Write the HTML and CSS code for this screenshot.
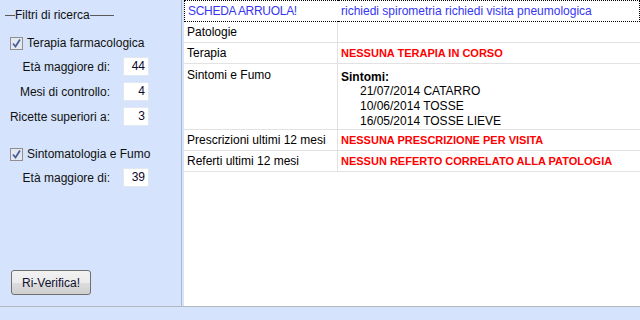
FILE: index.html
```html
<!DOCTYPE html>
<html lang="it">
<head>
<meta charset="UTF-8">
<title>Filtri di ricerca</title>
<link rel="stylesheet" href="styles.css">
</head>
<body>

<div class="window">
  <div class="main">
    <div class="sidebar">
      <div class="group-title"><span>Filtri di ricerca</span></div>

      <label class="check-row">
        <span class="checkbox"><svg width="11" height="11" viewBox="0 0 11 11"><path d="M2 5.5 L4.5 8.5 L9 1.5" fill="none" stroke="#4a5f9a" stroke-width="1.8"/></svg></span>
        Terapia farmacologica
      </label>
      <div class="field first">
        <span class="field-label">Età maggiore di:</span>
        <span class="field-input">44</span>
      </div>
      <div class="field">
        <span class="field-label">Mesi di controllo:</span>
        <span class="field-input">4</span>
      </div>
      <div class="field">
        <span class="field-label">Ricette superiori a:</span>
        <span class="field-input">3</span>
      </div>

      <label class="check-row second">
        <span class="checkbox"><svg width="11" height="11" viewBox="0 0 11 11"><path d="M2 5.5 L4.5 8.5 L9 1.5" fill="none" stroke="#4a5f9a" stroke-width="1.8"/></svg></span>
        Sintomatologia e Fumo
      </label>
      <div class="field first">
        <span class="field-label">Età maggiore di:</span>
        <span class="field-input">39</span>
      </div>

      <button class="verify">Ri-Verifica!</button>
    </div>

    <div class="content">
      <table class="scheda">
        <tr class="focus">
          <td class="name link">SCHEDA ARRUOLA!</td>
          <td class="link">richiedi spirometria richiedi visita pneumologica</td>
        </tr>
        <tr>
          <td class="name">Patologie</td>
          <td></td>
        </tr>
        <tr>
          <td class="name">Terapia</td>
          <td class="alert">NESSUNA TERAPIA IN CORSO</td>
        </tr>
        <tr class="tall">
          <td class="name">Sintomi e Fumo</td>
          <td>
            <div class="sym-title">Sintomi:</div>
            <div class="sym">21/07/2014 CATARRO</div>
            <div class="sym">10/06/2014 TOSSE</div>
            <div class="sym">16/05/2014 TOSSE LIEVE</div>
          </td>
        </tr>
        <tr>
          <td class="name">Prescrizioni ultimi 12 mesi</td>
          <td class="alert">NESSUNA PRESCRIZIONE PER VISITA</td>
        </tr>
        <tr>
          <td class="name">Referti ultimi 12 mesi</td>
          <td class="alert">NESSUN REFERTO CORRELATO ALLA PATOLOGIA</td>
        </tr>
      </table>
    </div>
  </div>
</div>

</body>
</html>
```

FILE: styles.css
```css
body {
  margin: 0;
  background: #d5e4fc;
  font-family: "Liberation Sans", Arial, sans-serif;
  font-size: 12px;
  color: #000;
}
.window {
  width: 640px;
  height: 320px;
  overflow: hidden;
}
.main {
  display: flex;
  height: 306px;
  border-bottom: 1px solid #b4b8bf;
}
.sidebar {
  width: 181px;
  border-right: 1px solid #aab9d0;
  margin-right: 2px;
  display: flex;
  flex-direction: column;
  color: #111;
}
.group-title {
  display: flex;
  align-items: center;
  height: 30px;
  margin-left: 5px;
  width: 109px;
}
.group-title::before {
  content: "";
  width: 10px;
  border-top: 1px solid #5a5a5a;
}
.group-title::after {
  content: "";
  flex: 1;
  border-top: 1px solid #5a5a5a;
}
.check-row {
  display: flex;
  align-items: center;
  height: 14px;
  margin-top: 6px;
  padding-left: 10px;
}
.check-row.second {
  margin-top: 21px;
}
.checkbox {
  width: 11px;
  height: 11px;
  border: 1px solid #8f8f8f;
  background: #e4e8f0;
  margin-right: 4px;
  display: flex;
}
.field {
  display: flex;
  align-items: center;
  height: 19px;
  margin-top: 6px;
}
.field.first {
  margin-top: 7px;
}
.field-label {
  width: 110px;
  text-align: right;
}
.field-input {
  margin-left: 13px;
  width: 26px;
  height: 19px;
  box-sizing: border-box;
  background: #fff;
  border: 1px solid #e2e8f0;
  text-align: right;
  padding-right: 3px;
  line-height: 17px;
  color: #0a0a2a;
}
.verify {
  margin: auto 0 11px 11px;
  width: 80px;
  height: 25px;
  font-family: inherit;
  font-size: 12px;
  color: #101030;
  border: 1px solid #707070;
  border-radius: 3px;
  background: linear-gradient(#f2f2f2, #ebebeb 50%, #dddddd 51%, #cfcfcf);
  padding: 0;
}
.content {
  flex: 1;
  background: #fff;
}
.scheda {
  width: 100%;
  border-collapse: separate;
  border-spacing: 0;
}
.scheda td {
  height: 21px;
  box-sizing: border-box;
  padding: 3px 3px 0;
  vertical-align: top;
  line-height: 14px;
  border-bottom: 1px solid #e2e2e2;
}
.scheda td.name {
  width: 154px;
  border-right: 1px solid #e2e2e2;
}
.scheda tr.focus td {
  height: 22px;
  border-top: 1px dotted #000;
  border-bottom: 1px dotted #000;
  padding-top: 3px;
}
.scheda tr.focus td.name {
  border-left: 1px dotted #000;
  border-right: none;
  letter-spacing: -0.3px;
}
.scheda tr.focus td:last-child {
  border-right: 1px dotted #000;
}
.link {
  color: #3636f4;
}
.alert {
  color: #ff0000;
  font-weight: bold;
  font-size: 11px;
}
.scheda tr.tall td {
  height: 66px;
  padding-top: 4px;
}
.sym-title {
  font-weight: bold;
  margin-top: 2px;
}
.sym {
  padding-left: 19px;
  line-height: 15px;
}
```
